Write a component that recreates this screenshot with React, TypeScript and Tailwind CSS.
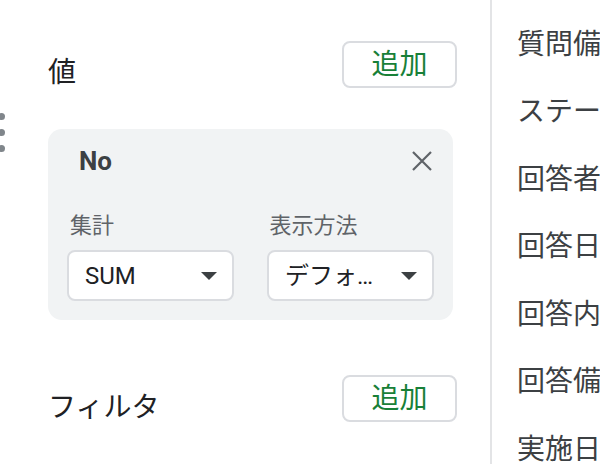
import React from "react";

const font = { fontFamily: 'Roboto, "Noto Sans CJK JP", sans-serif' };

function AddButton() {
  return (
    <button className="w-[115px] h-[47px] shrink-0 rounded-[8px] border-2 border-[#dadce0] bg-white text-[28px] leading-none text-[#188038] flex items-center justify-center">
      追加
    </button>
  );
}

function Caret() {
  return (
    <svg width="16" height="8" viewBox="0 0 16 8" className="shrink-0">
      <path d="M0 0h16L8 8z" fill="#3c4043" />
    </svg>
  );
}

function Select({ value }: { value: string }) {
  return (
    <div className="h-[51px] rounded-[8px] border-2 border-[#dadce0] bg-white flex items-center pl-[16px] pr-[15px]">
      <span className="w-[96px] truncate text-[24px] text-[#202124] leading-[30px]">
        {value}
      </span>
      <div className="flex-1" />
      <Caret />
    </div>
  );
}

const fields = ["質問備考", "ステータス", "回答者", "回答日時", "回答内容", "回答備考", "実施日"];

export default function App() {
  return (
    <div style={font} className="w-[600px] h-[464px] overflow-hidden bg-white flex relative">
      {/* drag handle */}
      <div className="absolute left-[-2px] top-[113px] flex flex-col gap-[9px]">
        <div className="w-[7px] h-[7px] rounded-full bg-[#80868b]" />
        <div className="w-[7px] h-[7px] rounded-full bg-[#80868b]" />
        <div className="w-[7px] h-[7px] rounded-full bg-[#80868b]" />
      </div>

      <div className="w-[490px] shrink-0 pl-[48px] pr-[33px] pt-[41px]">
        <div className="flex justify-between items-start h-[47px]">
          <div className="mt-[17px] text-[28px] leading-[30px] text-[#202124]">値</div>
          <AddButton />
        </div>

        <div className="mt-[41px] w-[405px] h-[191px] rounded-[14px] bg-[#f1f3f4] px-[19px] pt-[17px]">
          <div className="flex items-center justify-between h-[30px]">
            <span className="pl-[12px] text-[26px] font-bold text-[#3c4043] leading-[30px]">No</span>
            <svg width="20" height="20" viewBox="0 0 20 20" className="mr-[2px]">
              <path d="M1 1L19 19M19 1L1 19" stroke="#5f6368" strokeWidth="2.2" />
            </svg>
          </div>
          <div className="grid grid-cols-2 gap-x-[33px] mt-[37px] pl-[3px]">
            <div className="text-[22px] leading-[26px] text-[#5f6368]">集計</div>
            <div className="text-[22px] leading-[26px] text-[#5f6368] pl-[1px]">表示方法</div>
          </div>
          <div className="grid grid-cols-2 gap-x-[33px] mt-[11px]">
            <Select value="SUM" />
            <Select value="デフォルト" />
          </div>
        </div>

        <div className="mt-[55px] flex justify-between items-start h-[47px]">
          <div className="mt-[18px] text-[28px] leading-[29px] text-[#202124]">フィルタ</div>
          <AddButton />
        </div>
      </div>

      <div className="w-[2px] shrink-0 bg-[#e3e4e6]" />

      <div className="flex-1 min-w-0 overflow-hidden pl-[25px] pt-[11px]">
        {fields.map((f) => (
          <div key={f} className="h-[67.5px] flex items-center whitespace-nowrap text-[28px] text-[#3c4043]">
            {f}
          </div>
        ))}
      </div>
    </div>
  );
}
